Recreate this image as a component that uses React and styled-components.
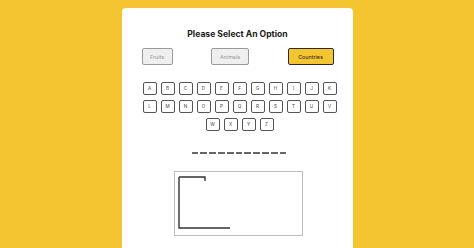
import React from 'react';
import styled, { createGlobalStyle } from 'styled-components';

const GlobalStyle = createGlobalStyle`
  html, body {
    margin: 0;
    padding: 0;
    background: #f5c431;
    font-family: "Inter", "Open Sans", sans-serif;
  }
  * { box-sizing: border-box; }
`;

const Page = styled.div`
  height: 248px;
  overflow: hidden;
  padding-top: 8px;
`;

const Card = styled.div`
  width: 231px;
  height: 260px;
  margin: 0 auto;
  background: #fff;
  border-radius: 4px;
  padding: 21px 19px 0 20px;
  display: flex;
  flex-direction: column;
  align-items: center;
`;

const Title = styled.h1`
  margin: 0;
  font-size: 8.6px;
  font-weight: 700;
  color: #1a1a1a;
  line-height: 10px;
`;

const Options = styled.div`
  width: 100%;
  display: flex;
  justify-content: space-between;
  margin-top: 9px;
`;

const OptionButton = styled.button`
  height: 17px;
  padding: 0 ${p => (p.$active ? 6 : 4)}px;
  font-family: inherit;
  font-size: 5.4px;
  border-radius: 2px;
  border: ${p => (p.$active ? '1.5px solid #2b2b2b' : '1px solid #9a9a9a')};
  background: ${p => (p.$active ? '#f5c431' : '#efefef')};
  color: ${p => (p.$active ? '#222' : '#999')};
  width: ${p => p.$w}px;
`;

const Keys = styled.div`
  width: 200px;
  margin: 17px 0 0 4px;
  display: flex;
  flex-wrap: wrap;
  justify-content: center;
  row-gap: 5px;
`;

const Key = styled.button`
  width: 14px;
  height: 13px;
  margin: 0 2px;
  padding: 0;
  border: 1px solid #555;
  border-radius: 2px;
  background: #fff;
  color: #444;
  font-family: inherit;
  font-size: 4.6px;
  display: flex;
  align-items: center;
  justify-content: center;
`;

const Word = styled.div`
  display: flex;
  gap: 2px;
  margin-top: 21px;
  margin-left: 3px;
`;

const Blank = styled.span`
  width: 6.8px;
  height: 1.6px;
  background: #666;
`;

const Board = styled.div`
  width: 129px;
  height: 65px;
  margin-top: 17px;
  margin-left: 2px;
  border: 1px solid #bdbdbd;
  padding: 4px 3px;
`;

const letters = 'ABCDEFGHIJKLMNOPQRSTUVWXYZ'.split('');

export default function App() {
  return (
    <>
      <GlobalStyle />
      <Page>
        <Card>
          <Title>Please Select An Option</Title>
          <Options>
            <OptionButton $w={31}>Fruits</OptionButton>
            <OptionButton $w={38}>Animals</OptionButton>
            <OptionButton $w={46} $active>Countries</OptionButton>
          </Options>
          <Keys>
            {letters.map(l => (
              <Key key={l}>{l}</Key>
            ))}
          </Keys>
          <Word>
            {Array.from({ length: 11 }).map((_, i) => (
              <Blank key={i} />
            ))}
          </Word>
          <Board>
            <svg width="60" height="58" viewBox="0 0 60 58">
              <path
                d="M1 1 H27 V5 M1 1 V52 H52"
                fill="none"
                stroke="#333"
                strokeWidth="1.4"
              />
            </svg>
          </Board>
        </Card>
      </Page>
    </>
  );
}
